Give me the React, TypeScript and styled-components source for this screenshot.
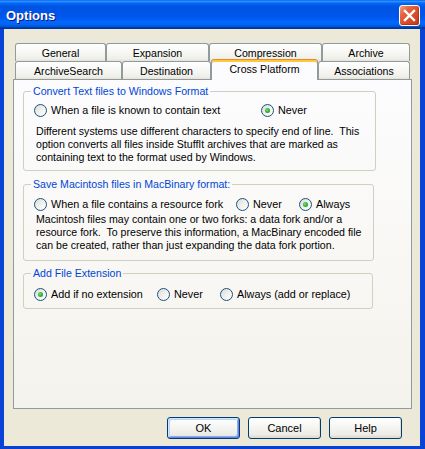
import React from 'react';
import styled, { createGlobalStyle } from 'styled-components';

const Global = createGlobalStyle`
  html, body { margin: 0; padding: 0; background: #ECE9D8; }
  body {
    font-family: "Liberation Sans", Arial, sans-serif;
    font-size: 10.6px;
    color: #000;
  }
  * { box-sizing: border-box; }
`;

const Window = styled.div`
  width: 425px;
  height: 449px;
  display: flex;
  flex-direction: column;
  overflow: hidden;
`;

const TitleBar = styled.div`
  height: 29px;
  flex: 0 0 29px;
  display: flex;
  align-items: center;
  padding: 1px 5px 0 6px;
  background: linear-gradient(
    180deg,
    #0058ee 0%,
    #3593ff 4%,
    #288eff 6%,
    #127dff 8%,
    #036ffc 10%,
    #0262ee 14%,
    #0057e5 20%,
    #0054e3 24%,
    #0055eb 56%,
    #005bf5 66%,
    #026afe 76%,
    #0062ef 86%,
    #0052d6 92%,
    #0040ab 94%,
    #003092 100%
  );
`;

const TitleText = styled.span`
  font-family: "Liberation Sans", Arial, sans-serif;
  font-weight: bold;
  font-size: 13px;
  color: #fff;
  text-shadow: 1px 1px 0 #0a1883;
`;

const CloseButton = styled.div`
  margin-left: auto;
  width: 21px;
  height: 21px;
  border: 1px solid #fff;
  border-radius: 3px;
  background: linear-gradient(135deg, #f3a083 0%, #e4633c 30%, #d9492a 65%, #c23b1b 100%);
  box-shadow: inset -1px -1px 1px rgba(120, 30, 0, 0.4);
  display: flex;
  align-items: center;
  justify-content: center;
`;

const Frame = styled.div`
  flex: 1;
  display: flex;
  flex-direction: column;
  background: #ece9d8;
  border-left: 4px solid #0843d6;
  border-right: 5px solid #0843d6;
  border-bottom: 3px solid #0841d0;
  padding: 14px 8px 7px 9px;
`;

const TabStrip = styled.div`
  display: flex;
  flex-direction: column;
`;

const TabRow = styled.div`
  display: flex;
  height: 18px;
  padding-left: 2px;
`;

const Tab = styled.div<{ $w: number; $selected?: boolean }>`
  width: ${(p) => p.$w}px;
  flex: 0 0 ${(p) => p.$w}px;
  height: ${(p) => (p.$selected ? 21 : 18)}px;
  margin-top: ${(p) => (p.$selected ? -2 : 0)}px;
  margin-bottom: ${(p) => (p.$selected ? -1 : 0)}px;
  position: relative;
  z-index: ${(p) => (p.$selected ? 2 : 0)};
  display: flex;
  align-items: center;
  justify-content: center;
  padding-bottom: ${(p) => (p.$selected ? 2 : 0)}px;
  border: 1px solid #919b9c;
  border-bottom: none;
  border-radius: 3px 3px 0 0;
  font-size: 10.6px;
  ${(p) =>
    p.$selected
      ? `
    border-top: 1px solid #e68b2c;
    box-shadow: inset 0 2px 0 #ffc73c;
    background: #fcfcfe;
  `
      : `
    background: linear-gradient(180deg, #ffffff 0%, #fafaf9 30%, #f0f0ea 85%, #e3e2da 100%);
  `}
`;

const Panel = styled.div`
  flex: 1;
  position: relative;
  z-index: 1;
  border: 1px solid #919b9c;
  background: linear-gradient(180deg, #fcfcfe 0%, #f8f7f3 60%, #f3f2ec 100%);
  display: flex;
  flex-direction: column;
  align-items: flex-start;
  padding: 5px 0 0 9px;
`;

const Group = styled.fieldset<{ $w: number; $mt: number; $pt: number; $pb: number }>`
  width: ${(p) => p.$w}px;
  margin: ${(p) => p.$mt}px 0 0 0;
  padding: ${(p) => p.$pt}px 8px ${(p) => p.$pb}px 10px;
  border: 1px solid #d0d0bf;
  border-radius: 3px;
  min-width: 0;
`;

const Legend = styled.legend`
  color: #0046d5;
  padding: 0 2px;
  margin-left: -3px;
  line-height: 13px;
  font-size: 10.6px;
`;

const RadioRow = styled.div`
  display: flex;
  align-items: center;
  height: 13px;
  font-size: 10.8px;
`;

const RadioOption = styled.label<{ $w?: number }>`
  display: flex;
  align-items: center;
  gap: 4px;
  line-height: 13px;
  white-space: nowrap;
  ${(p) => (p.$w ? `width: ${p.$w}px; flex: 0 0 ${p.$w}px;` : '')}
`;

const RadioCircle = styled.span<{ $checked?: boolean }>`
  width: 13px;
  height: 13px;
  flex: 0 0 13px;
  border-radius: 50%;
  border: 1px solid #1c5180;
  background: linear-gradient(135deg, #dcdcd7 0%, #f0f0ec 50%, #ffffff 100%);
  display: flex;
  align-items: center;
  justify-content: center;
  &::after {
    content: '';
    display: ${(p) => (p.$checked ? 'block' : 'none')};
    width: 5px;
    height: 5px;
    border-radius: 50%;
    background: radial-gradient(circle at 40% 40%, #7fe07f 0%, #2fb22f 50%, #1a911a 100%);
  }
`;

const Description = styled.div<{ $mt: number }>`
  margin-top: ${(p) => p.$mt}px;
  margin-left: 2px;
  line-height: 13px;
  white-space: pre;
  font-size: 10.6px;
`;

const ButtonRow = styled.div`
  display: flex;
  justify-content: flex-end;
  gap: 8px;
  margin-top: 8px;
  padding-right: 10px;
`;

const Button = styled.div<{ $default?: boolean }>`
  width: 73px;
  height: 22px;
  border: 1px solid #003c74;
  border-radius: 3px;
  font-size: 11px;
  background: linear-gradient(180deg, #ffffff 0%, #f4f4f0 50%, #ecebe6 85%, #d6d0c5 100%);
  display: flex;
  align-items: center;
  justify-content: center;
  ${(p) =>
    p.$default
      ? `box-shadow: inset 1px 1px 0 #cee7ff, inset -1px -1px 0 #6982ee, inset 2px 2px 0 #bcd4f6, inset -2px -2px 0 #89ade4;`
      : `box-shadow: inset -1px -1px 0 #e3e0d3;`}
`;

type TabDef = { label: string; w: number; selected?: boolean };

const row1: TabDef[] = [
  { label: 'General', w: 91 },
  { label: 'Expansion', w: 103 },
  { label: 'Compression', w: 113 },
  { label: 'Archive', w: 88 },
];

const row2: TabDef[] = [
  { label: 'ArchiveSearch', w: 107 },
  { label: 'Destination', w: 89 },
  { label: 'Cross Platform', w: 107, selected: true },
  { label: 'Associations', w: 92 },
];

const Radio = ({ label, checked, w }: { label: string; checked?: boolean; w?: number }) => (
  <RadioOption $w={w}>
    <RadioCircle $checked={checked} />
    <span>{label}</span>
  </RadioOption>
);

export default function App() {
  return (
    <>
      <Global />
      <Window>
        <TitleBar>
          <TitleText>Options</TitleText>
          <CloseButton>
            <svg width="13" height="13" viewBox="0 0 13 13">
              <path d="M2 2 L11 11 M11 2 L2 11" stroke="#fff" strokeWidth="2.4" strokeLinecap="square" />
            </svg>
          </CloseButton>
        </TitleBar>
        <Frame>
          <TabStrip>
            <TabRow>
              {row1.map((t) => (
                <Tab key={t.label} $w={t.w}>
                  {t.label}
                </Tab>
              ))}
            </TabRow>
            <TabRow>
              {row2.map((t) => (
                <Tab key={t.label} $w={t.w} $selected={t.selected}>
                  {t.label}
                </Tab>
              ))}
            </TabRow>
          </TabStrip>
          <Panel>
            <Group $w={353} $mt={0} $pt={6} $pb={6}>
              <Legend>Convert Text files to Windows Format</Legend>
              <RadioRow>
                <Radio label="When a file is known to contain text" w={227} />
                <Radio label="Never" checked />
              </RadioRow>
              <Description $mt={8}>
                {'Different systems use different characters to specify end of line.  This\noption converts all files inside StuffIt archives that are marked as\ncontaining text to the format used by Windows.'}
              </Description>
            </Group>
            <Group $w={351} $mt={7} $pt={7} $pb={8}>
              <Legend>Save Macintosh files in MacBinary format:</Legend>
              <RadioRow>
                <Radio label="When a file contains a resource fork" w={202} />
                <Radio label="Never" w={63} />
                <Radio label="Always" checked />
              </RadioRow>
              <Description $mt={2}>
                {'Macintosh files may contain one or two forks: a data fork and/or a\nresource fork.  To preserve this information, a MacBinary encoded file\ncan be created, rather than just expanding the data fork portion.'}
              </Description>
            </Group>
            <Group $w={350} $mt={6} $pt={8} $pb={7}>
              <Legend>Add File Extension</Legend>
              <RadioRow>
                <Radio label="Add if no extension" checked w={123} />
                <Radio label="Never" w={63} />
                <Radio label="Always (add or replace)" />
              </RadioRow>
            </Group>
          </Panel>
          <ButtonRow>
            <Button $default>OK</Button>
            <Button>Cancel</Button>
            <Button>Help</Button>
          </ButtonRow>
        </Frame>
      </Window>
    </>
  );
}
